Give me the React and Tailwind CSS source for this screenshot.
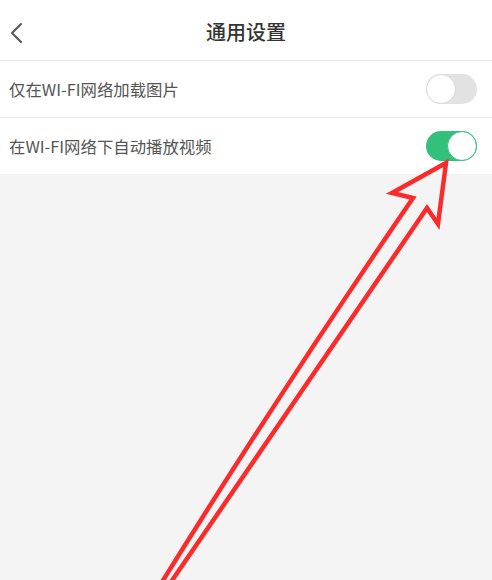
import { useState } from 'react'

function Toggle({ on, onChange }) {
  return (
    <button
      onClick={onChange}
      className={`relative w-[51px] h-[30px] rounded-full transition ${
        on ? 'bg-[#33c07a]' : 'bg-[#e2e2e2]'
      }`}
    >
      <span
        className={`absolute top-0 w-[30px] h-[30px] rounded-full bg-white border ${
          on ? 'right-0 border-[#33c07a]' : 'left-0 border-[#d9d9d9]'
        }`}
      />
    </button>
  )
}

function Row({ label, on, onChange }) {
  return (
    <div className="flex items-center justify-between h-[56px] pl-[9px] pr-[15px]">
      <span className="text-[16.4px] text-[#555555]">{label}</span>
      <Toggle on={on} onChange={onChange} />
    </div>
  )
}

export default function App() {
  const [imagesOnWifi, setImagesOnWifi] = useState(false)
  const [autoPlay, setAutoPlay] = useState(true)

  return (
    <div
      className="relative w-[492px] h-[580px] overflow-hidden bg-[#f4f4f4]"
      style={{ fontFamily: '"Noto Sans CJK SC", "Noto Sans", sans-serif' }}
    >
      <div className="bg-white">
        <div className="relative flex items-center justify-center h-[61px] border-b border-[#e8e8e8]">
          <button className="absolute left-[7px] top-[20px] p-[2px]">
            <svg width="14" height="22" viewBox="0 0 14 22" fill="none">
              <path d="M12 2 L3 11 L12 20" stroke="#555" strokeWidth="2" strokeLinecap="round" strokeLinejoin="round" />
            </svg>
          </button>
          <h1 className="text-[20px] font-medium text-[#333333] pt-[4px]">通用设置</h1>
        </div>
        <div className="border-b border-[#ececec]">
          <Row label="仅在WI-FI网络加载图片" on={imagesOnWifi} onChange={() => setImagesOnWifi(!imagesOnWifi)} />
        </div>
        <Row label="在WI-FI网络下自动播放视频" on={autoPlay} onChange={() => setAutoPlay(!autoPlay)} />
      </div>

      {/* red arrow annotation */}
      <svg className="absolute inset-0 pointer-events-none" width="492" height="580" viewBox="0 0 492 580">
        <path
          d="M162 582 Q 280 392 413 198 L 392 193 L 446 163 L 438 224 L 427 208 L 171 582"
          fill="none"
          stroke="#fb2b2b"
          strokeWidth="4.5"
          strokeLinejoin="miter"
        />
      </svg>
    </div>
  )
}
